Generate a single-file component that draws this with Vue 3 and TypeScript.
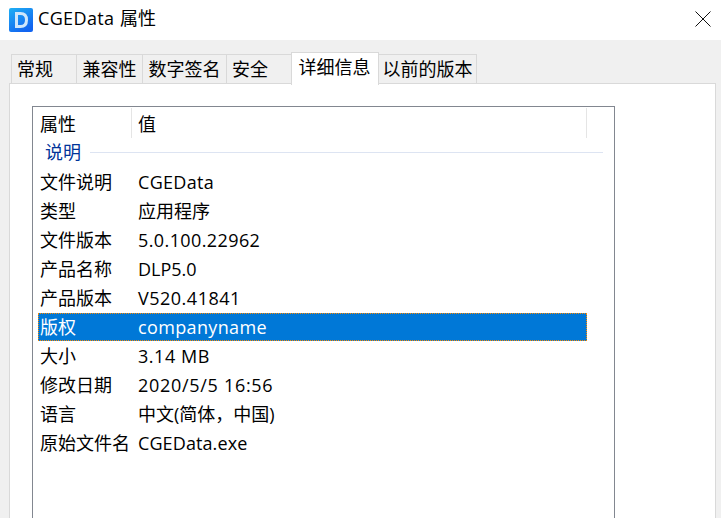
<script setup lang="ts">
interface Tab { label: string; width: number; active?: boolean; left?: boolean }
const tabs: Tab[] = [
  { label: '常规', width: 66, left: true },
  { label: '兼容性', width: 67 },
  { label: '数字签名', width: 85 },
  { label: '安全', width: 66, left: true },
  { label: '详细信息', width: 88, active: true },
  { label: '以前的版本', width: 99 },
]
interface Row { name: string; value: string; track?: number; selected?: boolean }
const rows: Row[] = [
  { name: '文件说明', value: 'CGEData', track: 0.3 },
  { name: '类型', value: '应用程序' },
  { name: '文件版本', value: '5.0.100.22962', track: 0.4 },
  { name: '产品名称', value: 'DLP5.0' },
  { name: '产品版本', value: 'V520.41841', track: 0.5 },
  { name: '版权', value: 'companyname', track: 0.36, selected: true },
  { name: '大小', value: '3.14 MB', track: 0.55 },
  { name: '修改日期', value: '2020/5/5 16:56', track: 0.7 },
  { name: '语言', value: '中文(简体，中国)' },
  { name: '原始文件名', value: 'CGEData.exe', track: 0.1 },
]
</script>

<template>
  <div class="window">
    <header class="titlebar">
      <svg class="app-icon" width="24" height="24" viewBox="0 0 24 24">
        <defs>
          <linearGradient id="iconfill" x1="0" y1="0" x2="0.6" y2="1">
            <stop offset="0" stop-color="#1fb0f4" />
            <stop offset="1" stop-color="#1264f0" />
          </linearGradient>
        </defs>
        <rect width="24" height="24" rx="2" fill="url(#iconfill)" />
        <path d="M7.500 5.500h4c4 0 6 2.500 6 6.500s-2 6.500-6 6.500h-4z" fill="none" stroke="#cfe6fb" stroke-width="3" />
      </svg>
      <span class="title"><span class="title-latin">CGEData</span> 属性</span>
      <svg class="close" width="16" height="16" viewBox="0 0 16 16">
        <path d="M0.500 0.500L15.500 15.500M15.500 0.500L0.500 15.500" stroke="#111" stroke-width="1" fill="none" />
      </svg>
    </header>
    <main class="body">
      <nav class="tabs">
        <div
          v-for="t in tabs"
          :key="t.label"
          class="tab"
          :class="{ active: t.active, left: t.left }"
          :style="{ width: t.width + 'px' }"
        >{{ t.label }}</div>
      </nav>
      <section class="panel">
        <div class="list">
          <div class="head">
            <div class="head-name">属性</div>
            <div class="head-value">值</div>
          </div>
          <div class="group">
            <span class="group-label">说明</span>
            <span class="group-line"></span>
          </div>
          <div v-for="r in rows" :key="r.name" class="row" :class="{ selected: r.selected }">
            <span class="cell-name">{{ r.name }}</span>
            <span class="cell-value" :style="{ letterSpacing: (r.track ?? 0) + 'px' }">{{ r.value }}</span>
          </div>
        </div>
      </section>
    </main>
  </div>
</template>

<style>
html, body { margin: 0; background: #fff; overflow: hidden; }
</style>

<style scoped>
.window {
  width: 721px;
  height: 518px;
  overflow: hidden;
  display: flex;
  flex-direction: column;
  font-family: "Open Sans", "Noto Sans CJK SC", sans-serif;
  font-size: 18px;
  color: #000;
  background: #f0f0f0;
}
.titlebar {
  height: 40px;
  flex: none;
  background: #fff;
  display: flex;
  align-items: center;
  padding: 0 9px;
  box-sizing: border-box;
}
.app-icon { flex: none; margin-top: -1px; }
.title { margin-left: 5px; line-height: 36px; margin-top: -5px; }
.title-latin { letter-spacing: 0.35px; margin-right: 1px; }
.close { margin-left: auto; margin-right: 1px; margin-top: -3px; }
.body {
  flex: 1;
  min-height: 0;
  padding: 13px 5px 0 9px;
  display: flex;
  flex-direction: column;
}
.tabs {
  display: flex;
  align-items: flex-end;
  height: 31px;
  padding-left: 2px;
  flex: none;
  position: relative;
  z-index: 1;
  margin-bottom: -1px;
}
.tab {
  box-sizing: border-box;
  height: 30px;
  border: 1px solid #d9d9d9;
  margin-right: -1px;
  text-align: center;
  line-height: 29px;
  white-space: nowrap;
  background: #f0f0f0;
}
.tab.left { text-align: left; padding-left: 5px; }
.tab.active {
  height: 33px;
  background: #fff;
  border-bottom: none;
  line-height: 28px;
  padding-bottom: 4px;
  padding-right: 1px;
  position: relative;
  z-index: 1;
  margin-bottom: -1px;
}
.panel {
  flex: 1;
  min-height: 0;
  background: #fff;
  border: 1px solid #d9d9d9;
  border-bottom: none;
  padding: 22px 0 0 22px;
}
.list {
  width: 583px;
  height: 420px;
  box-sizing: border-box;
  border: 1px solid #828790;
  border-bottom: none;
  background: #fff;
  padding: 0 0 0 5px;
}
.head {
  display: flex;
  height: 32px;
  width: 549px;
  line-height: 34px;
  box-sizing: border-box;
  position: relative;
}
.head-name { width: 92px; padding-left: 2px; position: relative; }
.head-name::after, .head-value::after {
  content: "";
  position: absolute;
  top: 1px;
  right: 0;
  width: 1px;
  height: 30px;
  background: #e5e5e5;
}
.head-value { flex: 1; padding-left: 6px; position: relative; }
.group {
  height: 29px;
  display: flex;
  align-items: center;
  padding-left: 7px;
  width: 565px;
  box-sizing: border-box;
}
.group-label { color: #003399; line-height: 28px; margin-top: -3px; }
.group-line { flex: 1; height: 1px; background: #dde4f2; margin-left: 9px; margin-top: -2px; }
.row {
  display: flex;
  width: 549px;
  height: 28px;
  margin-bottom: 1px;
  box-sizing: border-box;
  line-height: 28px;
  padding-left: 2px;
  white-space: nowrap;
}
.row.selected {
  background: #0078d7;
  color: #fff;
  outline: 1px dotted #ff8a00;
  outline-offset: -1px;
}
.cell-name { width: 98px; flex: none; }
.cell-value { flex: 1; }
</style>
